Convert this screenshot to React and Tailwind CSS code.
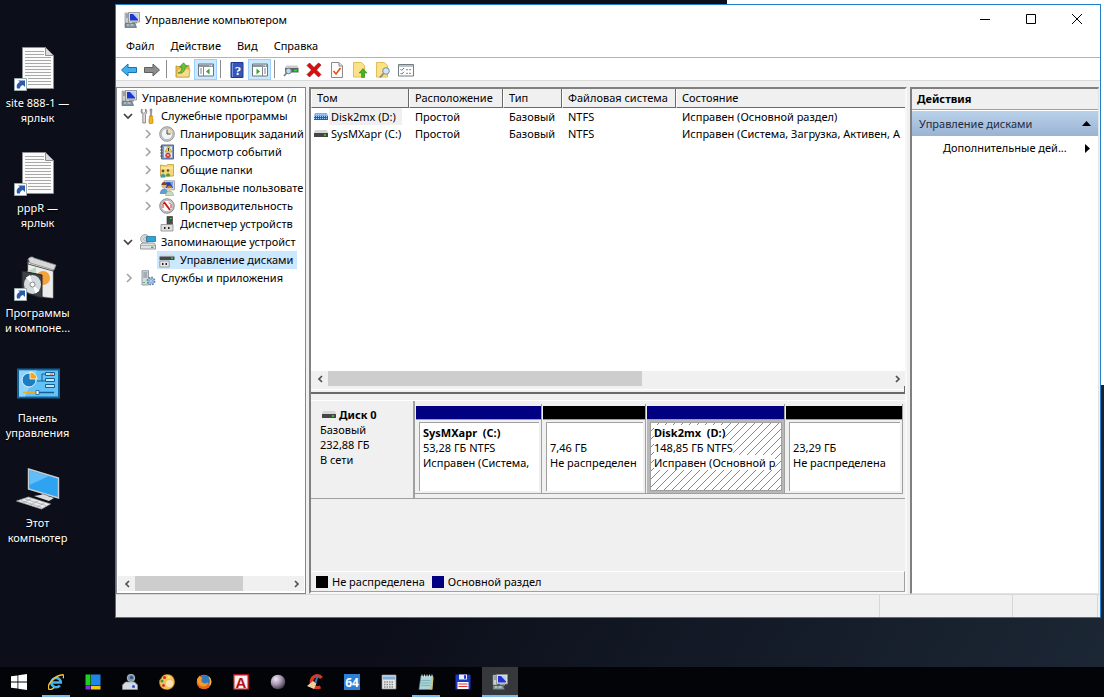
import { useState } from "react";

/* ---------- small icons, 16x16 ---------- */

function Svg({ size = 16, children }) {
  return (
    <svg width={size} height={size} viewBox="0 0 16 16" className="shrink-0" aria-hidden="true">
      {children}
    </svg>
  );
}

const ComputerIcon = ({ size }) => (
  <Svg size={size}>
    <path d="M1 1h4v10H1z" fill="#c9ccd0" stroke="#7d8288" strokeWidth=".6" />
    <path d="M2 3h2M2 5h2" stroke="#5b6066" strokeWidth=".8" />
    <path d="M4.500 .500h11v9.500h-11z" fill="#dcdcd6" stroke="#8b8b86" strokeWidth=".8" />
    <path d="M6 2h8v6.500H6z" fill="#1f35d0" />
    <path d="M9 2h5v5.500z" fill="#b9d0fc" />
    <path d="M8 10h5v1.500H8z" fill="#9a9a94" />
    <path d="M1 11.500h10l1.500 4H1z" fill="#7f979c" stroke="#4c5a5e" strokeWidth=".6" />
    <path d="M3 13h2M6.500 13h3" stroke="#d7e4e6" />
  </Svg>
);

const ToolsIcon = () => (
  <Svg>
    <path d="M2 1v3l1.800 1.500L5.500 4V1C7 2 7.300 5 5.500 6.500V15H2.800V6.500C.600 5 .800 2 2 1z" fill="#dcdcdc" stroke="#777" strokeWidth=".8" />
    <path d="M10 1h2l-.500 7h-1z" fill="#999" stroke="#777" strokeWidth=".5" />
    <path d="M9.300 8h3.400l-.600 2 .8 1v4l-1 .7H10l-1-.7v-4l.8-1z" fill="#f5b521" stroke="#c07c08" strokeWidth=".7" />
  </Svg>
);

const ClockIcon = () => (
  <Svg>
    <circle cx="8" cy="8" r="7.300" fill="#d0d0d0" stroke="#7d7d7d" strokeWidth=".8" />
    <circle cx="8" cy="8" r="5.600" fill="#f3f6f9" stroke="#8e8e8e" strokeWidth=".5" />
    <path d="M8 8V2.500A5.500 5.500 0 0 1 13.500 8z" fill="#f3dca4" />
    <path d="M8 3.500V8h3.500" fill="none" stroke="#3d4a66" />
  </Svg>
);

const EventIcon = () => (
  <Svg>
    <path d="M2.500 1h12v14h-12z" fill="#7f9cc9" stroke="#3e5a8c" strokeWidth=".9" />
    <path d="M5 2.500h8v11H5z" fill="#dfe8f5" />
    <path d="M1 3h3M1 6h3M1 9h3M1 12h3" stroke="#555" strokeWidth=".9" />
    <path d="M9.500 2l3.500 6H6z" fill="#ffd42a" stroke="#b98c00" strokeWidth=".6" />
    <path d="M9.500 4v3" stroke="#222" strokeWidth=".9" />
    <circle cx="9" cy="11.300" r="2.600" fill="#d92b2b" />
    <path d="M8 10.300l2 2m0-2l-2 2" stroke="#fff" strokeWidth=".8" />
  </Svg>
);

const SharedIcon = () => (
  <Svg>
    <path d="M1.500 3V14h13V2.500h-6L7.500 4z" fill="#f6d778" stroke="#c29a34" strokeWidth=".8" />
    <path d="M2 6h12" stroke="#fff0b8" />
    <circle cx="4" cy="9" r="1.400" fill="#7a4a28" />
    <path d="M1.500 15.500c0-5 5-5 5 0z" fill="#3f9c98" />
    <circle cx="9" cy="8.500" r="1.300" fill="#7a4a28" />
    <path d="M6.800 14.500c0-4.500 4.500-4.500 4.500 0z" fill="#5a9e3c" />
  </Svg>
);

const UsersIcon = () => (
  <Svg>
    <path d="M5 .800h10.500v9H5z" fill="#d9d9d9" stroke="#888" strokeWidth=".7" />
    <path d="M6.500 2.200H14V8H6.500z" fill="#1b3fc4" />
    <path d="M11 2.200h3V8z" fill="#7ea5f3" />
    <circle cx="5" cy="5.500" r="2.600" fill="#e0b48a" />
    <path d="M2.400 5c0-4 5.200-4 5.200 0z" fill="#7a4a20" />
    <path d="M.800 14c0-7 8.400-7 8.400 0z" fill="#5f9ed1" />
    <circle cx="10.500" cy="8.500" r="2.300" fill="#eccaa0" />
    <path d="M8.200 8c0-3.500 4.600-3.500 4.600 0z" fill="#b9802b" />
    <path d="M6.500 15.600c0-6 8-6 8 0z" fill="#c9dcc2" stroke="#7b9a76" strokeWidth=".5" />
  </Svg>
);

const PerfIcon = () => (
  <Svg>
    <circle cx="8" cy="8" r="7.300" fill="#c6c6c6" stroke="#777" strokeWidth=".8" />
    <circle cx="8" cy="8" r="5.600" fill="#fff" stroke="#999" strokeWidth=".5" />
    <path d="M4 10V5.500l2.500 0M10 4.500l2 2V10" fill="none" stroke="#c22" strokeWidth="1" />
    <path d="M5 4l6 8" stroke="#c81414" strokeWidth="1.800" />
  </Svg>
);

const DeviceIcon = () => (
  <Svg>
    <path d="M8 .500h5.500v8H8z" fill="#4a4d50" stroke="#2b2d2f" strokeWidth=".6" />
    <path d="M11 2.500h1.500" stroke="#56e04a" />
    <path d="M2 8.500h12v6.500H2z" fill="#dedede" stroke="#8c8c8c" strokeWidth=".8" />
    <path d="M5 11h1.500v2H5zM9 11h1.500v2H9z" fill="#222" />
  </Svg>
);

const StorageIcon = () => (
  <Svg>
    <circle cx="5" cy="5" r="4.400" fill="#d5dadd" stroke="#868c90" strokeWidth=".7" />
    <circle cx="5" cy="5" r="1.300" fill="#fff" stroke="#777" strokeWidth=".5" />
    <path d="M6.500 2.500h9v5h-9z" fill="#2aa7d6" stroke="#27627c" strokeWidth=".7" />
    <path d="M2 9h12l1.500 2v4H.500v-4z" fill="#dfe2e4" stroke="#7f8588" strokeWidth=".8" />
    <path d="M1 11.500h14" stroke="#999" strokeWidth=".6" />
    <path d="M11 13.300h2.500" stroke="#2cb82c" strokeWidth="1.300" />
  </Svg>
);

const DiskMgmtIcon = () => (
  <Svg>
    <path d="M2 2.500h12l1.500 2H.500z" fill="#d8d8d8" />
    <path d="M.500 4.500h15v3.500H.500z" fill="#46494c" />
    <path d="M12 6.200h2" stroke="#45e03c" strokeWidth="1.200" />
    <path d="M.800 9h9.400v6H.800z" fill="#e6e6e6" stroke="#8d8d8d" strokeWidth=".8" />
    <path d="M3 11h1.500v2H3zM6.500 11H8v2H6.500z" fill="#222" />
  </Svg>
);

const ServicesIcon = () => (
  <Svg>
    <path d="M2 .700h6.500V15H2z" fill="#d4dadf" stroke="#818b93" strokeWidth=".8" />
    <path d="M3.300 3h4M3.300 5h4M3.300 7h4" stroke="#6b7780" strokeWidth=".9" />
    <path d="M3.300 12.500h1.500" stroke="#2fae2f" />
    <circle cx="11" cy="11" r="3.600" fill="#a9c6e2" stroke="#5f86ad" strokeWidth="1.800" strokeDasharray="1.600 1.200" />
    <circle cx="11" cy="11" r="1.300" fill="#fff" stroke="#5f86ad" strokeWidth=".7" />
  </Svg>
);

const ArrowIcon = ({ fill, edge, flip }) => (
  <Svg>
    <path
      d="M.500 8L7 2v3.500h8.500v5H7V14z"
      fill={fill}
      stroke={edge}
      transform={flip ? "matrix(-1 0 0 1 16 0)" : undefined}
    />
  </Svg>
);

const UpFolderIcon = () => (
  <Svg>
    <path d="M1 4v11h13V3.500H9L8 5H5z" fill="#efc75e" stroke="#b88a20" strokeWidth=".8" />
    <path d="M1.500 15l1-8H15l-1 8z" fill="#f8dc8c" stroke="#c7982e" strokeWidth=".6" />
    <path d="M3 11c3-1 4-3 4-6H4.500L8.500 .800l4 4.200H10c0 5-3 7-7 6z" fill="#6cc23c" stroke="#2d7d12" strokeWidth=".6" />
  </Svg>
);

const PaneIcon = ({ right }) => (
  <Svg>
    <path d="M.500 2h15v12H.500z" fill="#fff" stroke="#6d7780" />
    <path d="M1 2.500h14v2.500H1z" fill="#8b969f" />
    <path d="M11.500 3.700h.8M13 3.700h1" stroke="#fff" />
    <path d={right ? "M10.500 5v9M12 7h2M12 9h2M12 11h2" : "M5.500 5v9M2 7h2M2 9h2M2 11h2"} stroke="#6d7780" strokeWidth=".9" />
    <path d={right ? "M4.500 6.500v6l3.500-3z" : "M11.500 6.500v6L8 9.500z"} fill="#3aa52a" />
  </Svg>
);

const HelpIcon = () => (
  <Svg>
    <path d="M2 .500h12v15H2z" fill="#3456b8" stroke="#1f3a8c" />
    <path d="M3.500 1v14" stroke="#7e9ae6" />
    <text x="9" y="12.500" textAnchor="middle" fontSize="13" fontWeight="bold" fontFamily="Liberation Serif, serif" fill="#fff">
      ?
    </text>
  </Svg>
);

const DriveScanIcon = () => (
  <Svg>
    <path d="M3 3.500h11.500l1 2.500H2z" fill="#c9cccf" />
    <path d="M2 6h13.500v4.500H2z" fill="#5d6367" />
    <path d="M11 8.500h3" stroke="#3ee03a" strokeWidth="1.500" />
    <circle cx="5.500" cy="9" r="2.800" fill="#b9d9ec" stroke="#6e7d88" />
    <path d="M3.700 11L1 14" stroke="#777" strokeWidth="1.600" />
  </Svg>
);

const DeleteIcon = () => (
  <Svg>
    <path d="M1 3.500L3.500 1 8 5.500 12.500 1 15 3 10.500 8l4.500 4.500L12.500 15 8 10.500 3.500 15 1 12.500 5.500 8z" fill="#d60f0f" stroke="#8e0000" strokeWidth=".6" />
  </Svg>
);

const CheckPageIcon = () => (
  <Svg>
    <path d="M2.500.500H10L13.500 4v11.500h-11z" fill="#fdfdfd" stroke="#8b8b8b" />
    <path d="M10 .500V4h3.500" fill="#ddd" stroke="#8b8b8b" />
    <path d="M4.500 9l2.500 3 4.500-6" fill="none" stroke="#e2561c" strokeWidth="1.700" />
  </Svg>
);

const NoteUpIcon = () => (
  <Svg>
    <path d="M1.500.500h8l3 3v11.500h-11z" fill="#fbe187" stroke="#dab84c" strokeWidth=".9" />
    <path d="M9.500 15.500V11H7l4-4.500 4 4.500h-2.500v4.500z" fill="#3fb32a" stroke="#25821a" strokeWidth=".5" />
  </Svg>
);

const NoteFindIcon = () => (
  <Svg>
    <path d="M1.500.500h8l3 3v11.500h-11z" fill="#fbe187" stroke="#dab84c" strokeWidth=".9" />
    <circle cx="11" cy="9" r="3.300" fill="#cfe6f3" stroke="#7b8c98" />
    <path d="M8.500 11.500l-3.500 4" stroke="#8a8a8a" strokeWidth="1.800" />
  </Svg>
);

const OptionsIcon = () => (
  <Svg>
    <path d="M.500 2.500h15v11.500H.500z" fill="#fff" stroke="#737b83" />
    <path d="M1 4h14" stroke="#9aa2aa" strokeWidth="1.300" />
    <path d="M2.500 7.200l1.200 1.200L6 6M2.500 11l1.200 1.200L6 9.800" fill="none" stroke="#2f7fd6" />
    <path d="M8 7.700h2M11 7.700h2M8 11.300h2M11 11.300h2" stroke="#888" />
  </Svg>
);

const VolumeIcon = ({ selected }) => (
  <svg width="14" height="8" viewBox="0 0 14 8" className="shrink-0" aria-hidden="true">
    <path d="M1 0h12l1 3H0z" fill={selected ? "#7db4e8" : "#d6d6d6"} />
    <path d="M0 3h14v4H0z" fill={selected ? "#1c62a8" : "#454545"} />
    {selected ? (
      <path d="M0 1.500h14M0 3.500h14M0 5.500h14" stroke="#9fd0ff" strokeWidth="1" strokeDasharray="1 1" />
    ) : (
      <path d="M10 5h2" stroke="#35e035" strokeWidth="1.500" />
    )}
  </svg>
);

const Chevron = ({ dir, className }) => {
  const d = { left: "M7 2L4 5l3 3", right: "M4 1l4 4-4 4", down: "M1 3l4 4 4-4", next: "M4 2l3 3-3 3" }[dir];
  return (
    <svg width="10" height="10" viewBox="0 0 10 10" className={className} aria-hidden="true">
      <path d={d} fill="none" stroke="currentColor" strokeWidth="1.700" />
    </svg>
  );
};

/* ---------- desktop icons, 48x48 ---------- */

const ShortcutBadge = () => (
  <g>
    <path d="M.500 33.500h12v12H.500z" fill="#fff" stroke="#9aa" />
    <path d="M3 43.500c-1-4 1-6 3-6.500L4 35.500h7v6.500L9 40c-2 .5-3 1.500-3 3.500z" fill="#2a5ca8" />
  </g>
);

const DocumentIcon = () => (
  <svg width="48" height="48" viewBox="0 0 48 48" aria-hidden="true">
    <path d="M8.500 2.500h23l8 8v33h-31z" fill="#fbfbfb" stroke="#8f8f8f" />
    <path d="M31.500 2.500v8h8z" fill="#dcdcdc" stroke="#8f8f8f" />
    <path
      d="M11 6.500h19M11 9.500h19M11 12.500h26M11 15.500h26M11 18.500h26M11 21.500h26M11 24.500h26M11 27.500h26M11 30.500h26M14 33.500h23M14 36.500h23M14 39.500h23"
      stroke="#a8a8a8"
    />
    <ShortcutBadge />
  </svg>
);

const ProgramsIcon = () => (
  <svg width="48" height="48" viewBox="0 0 48 48" aria-hidden="true">
    <path d="M14 7l25 7v29l-17-2-8-5z" fill="#ececea" stroke="#aaa" strokeWidth=".6" />
    <path d="M14 4c3-3 5-2 6-1l22 7-2 5-24-7z" fill="#d7d7d7" stroke="#8b8b8b" strokeWidth=".8" />
    <path d="M14 4v5l25 7" fill="none" stroke="#555" />
    <circle cx="29" cy="23" r="7" fill="#f3a33a" />
    <path d="M12 17l10-5v12z" fill="#b9d9bd" />
    <path d="M8 16l20 4v23L8 37z" fill="#3d4348" stroke="#222" />
    <ellipse cx="18.500" cy="29.500" rx="8.500" ry="9.500" fill="#d4dadd" />
    <path d="M18.500 29.500L12 22.500l4-2.500zM18.500 29.500l7 6-4 3z" fill="#fff" />
    <circle cx="18.500" cy="29.500" r="2.500" fill="#fff" stroke="#888" />
    <ShortcutBadge />
  </svg>
);

const ControlPanelIcon = () => (
  <svg width="48" height="48" viewBox="0 0 48 48" aria-hidden="true">
    <path d="M4 9.500h41v28H4z" fill="#63c2f7" stroke="#0f6399" strokeWidth="2" />
    <path d="M5 10.500h18L11 36.500H5z" fill="#8fd5fb" />
    <circle cx="15" cy="20" r="7" fill="#1b7ec2" stroke="#e4f5ff" />
    <path d="M16 19v-7a7 7 0 0 1 7 7z" fill="#f6a81c" stroke="#fff" strokeWidth=".8" />
    <path d="M23 21h5v-7h3M28 21h3" fill="none" stroke="#145f94" />
    <path d="M31.500 12.500h9v3h-9zM31.500 18.500h9v3h-9zM31.500 24.500h9v3h-9z" fill="#bfe7ff" stroke="#145f94" />
    <path d="M36 14h3" stroke="#f60" />
    <path d="M9 32.500h13" stroke="#f6a81c" strokeWidth="1.500" />
    <path d="M25 32.500h15" stroke="#145f94" strokeWidth="1.500" />
    <path d="M22 30.500h3v4h-3z" fill="#fff" stroke="#145f94" strokeWidth=".8" />
  </svg>
);

const ThisPcIcon = () => (
  <svg width="48" height="48" viewBox="0 0 48 48" aria-hidden="true">
    <path d="M14.500 4l30 9v20l-30-9z" fill="#2ea3f2" stroke="#c9ced2" strokeWidth="1.400" />
    <path d="M15.500 5.500L35 11 15.500 20z" fill="#63bdf8" />
    <path d="M27 28l7 2v3h-5z" fill="#8a8f93" />
    <path d="M20 31l9-1.500 11 3.500-5 3z" fill="#d9dcde" />
    <path d="M2.500 36l12-4 22 7-9 5z" fill="#e9ebec" stroke="#a5a9ac" strokeWidth=".7" />
    <path d="M7 35.500l21 7M11 34l21 6.500M9 38l8-4.500M16 40l8-4M23 42l7-4" stroke="#9da2a6" strokeWidth=".7" />
  </svg>
);

/* ---------- taskbar icons ---------- */

const StartIcon = () => (
  <Svg>
    <path d="M0 2.300l6.500-.9v6.200H0zM7.300 1.300L16 0v7.600H7.300zM0 8.400h6.500v6.200L0 13.700zM7.300 8.400H16V16l-8.700-1.200z" fill="#fff" />
  </Svg>
);

const IeIcon = () => (
  <Svg>
    <path d="M3.500 8.500h9.300a4.700 4.700 0 1 0-1 3" fill="none" stroke="#45b4ee" strokeWidth="2.600" />
    <path d="M1 15.500C-2 11 7 1 15 .800c1.200.6.800 2 .2 3.500" fill="none" stroke="#f3c32f" strokeWidth="1.500" />
    <path d="M1 15.500c1.500.5 3.500-.5 5-1.700" fill="none" stroke="#f3c32f" strokeWidth="1.400" />
  </Svg>
);

const TilesIcon = () => (
  <Svg>
    <path d="M.500.500h5v11h-5z" fill="#1fd11f" />
    <path d="M6 .500h9.500v11H6z" fill="#1f86e8" />
    <path d="M.500 12h5v3.500h-5z" fill="#8a2be2" />
    <path d="M6 12h9.500v3.500H6z" fill="#f0c419" />
  </Svg>
);

const WebcamIcon = () => (
  <Svg>
    <circle cx="9" cy="4" r="3.800" fill="#7b93ad" stroke="#c9d5e1" strokeWidth=".7" />
    <circle cx="9.500" cy="3.500" r="1.600" fill="#35506b" />
    <path d="M3.500 8h9l3 3v4.500H.500V11z" fill="#d5dae0" stroke="#8c959f" strokeWidth=".7" />
    <circle cx="11.500" cy="12.500" r="1.500" fill="#3050d8" />
  </Svg>
);

const PaletteIcon = () => (
  <Svg>
    <path d="M8 .500c5 0 7.500 3.500 7.500 7.500 0 5-4 7.500-7.500 7.500C3 15.500.500 12 .500 8c0-3 2-3 2.500-5C3.500 1.500 6 .500 8 .500z" fill="#f7c25c" stroke="#c87d1b" strokeWidth=".6" />
    <circle cx="5.500" cy="3.500" r="1.600" fill="#d93025" />
    <circle cx="10" cy="3.200" r="1.500" fill="#f4ec55" />
    <circle cx="3" cy="7" r="1.500" fill="#2f9e44" />
    <circle cx="4.500" cy="11.500" r="1.400" fill="#d93025" />
    <circle cx="10.500" cy="9.500" r="3.400" fill="#fbe3b5" />
  </Svg>
);

const FirefoxIcon = () => (
  <Svg>
    <circle cx="8" cy="8" r="7.300" fill="#e8641b" />
    <circle cx="9" cy="6" r="4.800" fill="#2e79c4" />
    <path d="M1 5c1-1 2-2 2.500-3.500C4 3 5 3.500 6.500 4 5 5.500 5 7 6.500 8.500 8.500 10 11 9.500 12 8c0 5-7 6-9.500 2C1.500 8.500 1 7 1 5z" fill="#f79a25" />
    <path d="M13 3c2 2.500 2 6 .8 8" fill="none" stroke="#f7c341" strokeWidth="1.200" />
  </Svg>
);

const BoxAIcon = () => (
  <Svg>
    <path d="M.500.500h15v15H.500z" fill="#c01818" stroke="#a81414" />
    <path d="M1.500 1.500h13v13h-13z" fill="#fbeeee" />
    <text x="8" y="13.500" textAnchor="middle" fontSize="15" fontWeight="bold" fontFamily="Liberation Sans, sans-serif" fill="#b31010">
      A
    </text>
  </Svg>
);

const SphereIcon = () => (
  <Svg>
    <defs>
      <radialGradient id="sphere" cx=".35" cy=".3" r=".75">
        <stop offset="0" stopColor="#f0e8f6" />
        <stop offset=".5" stopColor="#a898b2" />
        <stop offset="1" stopColor="#3a3444" />
      </radialGradient>
    </defs>
    <circle cx="8" cy="8" r="7.300" fill="url(#sphere)" />
  </Svg>
);

const CleanerIcon = () => (
  <Svg>
    <path d="M14.500 4C12 .500 6 1 4.500 6.500 3.500 12 8 15 13.500 13" fill="none" stroke="#d43a22" strokeWidth="3.400" />
    <path d="M10 1l1.500 1-2 7-2-1z" fill="#2f78b8" />
    <path d="M0 12l6-5 3.500 2.500L7 15z" fill="#efcfa0" />
  </Svg>
);

const SixtyFourIcon = () => (
  <Svg>
    <path d="M0 0h16v16H0z" fill="#2d7fd8" />
    <text x="8" y="12.500" textAnchor="middle" fontSize="12" fontWeight="bold" fontFamily="Noto Sans, sans-serif" fill="#fff">
      64
    </text>
  </Svg>
);

const CalcIcon = () => (
  <Svg>
    <path d="M1 1h14v14H1z" fill="#e6e6e6" stroke="#8d8d8d" strokeWidth=".7" />
    <path d="M2 2.500h12v3H2z" fill="#7eaeda" />
    <path d="M3 8h10M3 10.500h10M3 13h10" stroke="#8a8a8a" strokeWidth="1.400" strokeDasharray="1.500 1" />
  </Svg>
);

const NotepadIcon = () => (
  <Svg>
    <path d="M3 2h12l-1.500 13.500H1z" fill="#a8d5d8" stroke="#59878b" strokeWidth=".7" />
    <path d="M14 3l1.500.500-1 12H12z" fill="#cfc17a" />
    <path d="M4 .500v3M6.500.500v3M9 .500v3M11.500.500v3M14 .500v3" stroke="#e6e6e6" strokeWidth=".9" />
    <path d="M3.500 6.500h9M3.300 9h9M3 11.500h9" stroke="#6fa5a9" strokeWidth=".7" />
  </Svg>
);

const FloppyIcon = () => (
  <Svg>
    <path d="M.500.500h14l1 1v14H.500z" fill="#1c38c4" />
    <path d="M4 .500h8v5H4z" fill="#e8ecff" />
    <path d="M9 1.200h2v3.500H9z" fill="#1c38c4" />
    <path d="M2.500 8h11v7h-11z" fill="#fff" />
    <path d="M3.500 10h9M3.500 12.500h9" stroke="#d33" strokeWidth="1.200" />
  </Svg>
);

/* ---------- data ---------- */

const shortcuts = [
  { lines: ["site 888-1 —", "ярлык"], Icon: DocumentIcon },
  { lines: ["pppR —", "ярлык"], Icon: DocumentIcon },
  { lines: ["Программы", "и компоне..."], Icon: ProgramsIcon },
  { lines: ["Панель", "управления"], Icon: ControlPanelIcon },
  { lines: ["Этот", "компьютер"], Icon: ThisPcIcon },
];

const tree = [
  { level: 0, label: "Управление компьютером (л", Icon: ComputerIcon },
  { level: 1, label: "Служебные программы", Icon: ToolsIcon, arrow: "down" },
  { level: 2, label: "Планировщик заданий", Icon: ClockIcon, arrow: "right" },
  { level: 2, label: "Просмотр событий", Icon: EventIcon, arrow: "right" },
  { level: 2, label: "Общие папки", Icon: SharedIcon, arrow: "right" },
  { level: 2, label: "Локальные пользовате", Icon: UsersIcon, arrow: "right" },
  { level: 2, label: "Производительность", Icon: PerfIcon, arrow: "right" },
  { level: 2, label: "Диспетчер устройств", Icon: DeviceIcon },
  { level: 1, label: "Запоминающие устройст", Icon: StorageIcon, arrow: "down" },
  { level: 2, label: "Управление дисками", Icon: DiskMgmtIcon },
  { level: 1, label: "Службы и приложения", Icon: ServicesIcon, arrow: "right" },
];

const indents = ["pl-[3px]", "pl-1", "pl-[23px]"];

const volumes = [
  { name: "Disk2mx (D:)", layout: "Простой", type: "Базовый", fs: "NTFS", status: "Исправен (Основной раздел)" },
  { name: "SysMXapr (C:)", layout: "Простой", type: "Базовый", fs: "NTFS", status: "Исправен (Система, Загрузка, Активен, А" },
];

const partitions = [
  { name: "SysMXapr  (C:)", size: "53,28 ГБ NTFS", status: "Исправен (Система,", primary: true },
  { name: "", size: "7,46 ГБ", status: "Не распределен" },
  { name: "Disk2mx  (D:)", size: "148,85 ГБ NTFS", status: "Исправен (Основной р", primary: true },
  { name: "", size: "23,29 ГБ", status: "Не распределена" },
];

const tools = [
  { label: "Назад", icon: <ArrowIcon fill="#3fb0ee" edge="#1c70b0" /> },
  { label: "Вперед", icon: <ArrowIcon fill="#8d8d8d" edge="#5e5e5e" flip /> },
  null,
  { label: "Вверх", icon: <UpFolderIcon /> },
  { label: "Дерево консоли", icon: <PaneIcon />, on: true },
  null,
  { label: "Помощь", icon: <HelpIcon /> },
  { label: "Панель действий", icon: <PaneIcon right />, on: true },
  null,
  { label: "Повторить проверку", icon: <DriveScanIcon /> },
  { label: "Удалить", icon: <DeleteIcon /> },
  { label: "Свойства", icon: <CheckPageIcon /> },
  { label: "Открыть", icon: <NoteUpIcon /> },
  { label: "Найти", icon: <NoteFindIcon /> },
  { label: "Параметры", icon: <OptionsIcon /> },
];

const tasks = [
  { label: "Пуск", Icon: StartIcon },
  { label: "Internet Explorer", Icon: IeIcon, running: true },
  { label: "Плитки", Icon: TilesIcon },
  { label: "Камера", Icon: WebcamIcon },
  { label: "Палитра", Icon: PaletteIcon },
  { label: "Firefox", Icon: FirefoxIcon },
  { label: "Словарь", Icon: BoxAIcon },
  { label: "Сфера", Icon: SphereIcon },
  { label: "Очистка", Icon: CleanerIcon },
  { label: "AIDA64", Icon: SixtyFourIcon },
  { label: "Калькулятор", Icon: CalcIcon },
  { label: "Блокнот", Icon: NotepadIcon, running: true },
  { label: "Дискета", Icon: FloppyIcon },
  { label: "Управление компьютером", Icon: ComputerIcon, active: true },
];

/* ---------- parts ---------- */

function ScrollBar({ thumb }) {
  return (
    <div className="flex h-[15px] shrink-0 bg-[#f0f0f0] text-[#505050]">
      <button type="button" aria-label="Прокрутить влево" className="flex w-[17px] items-center justify-center">
        <Chevron dir="left" />
      </button>
      <div className="flex-1">
        <div className={`h-full bg-[#cdcdcd] ${thumb}`} />
      </div>
      <button type="button" aria-label="Прокрутить вправо" className="flex w-[17px] items-center justify-center">
        <Chevron dir="next" />
      </button>
    </div>
  );
}

function TitleBar() {
  return (
    <div className="flex h-[31px] items-start justify-between">
      <div className="flex h-[29px] items-center gap-[5px] pl-2">
        <ComputerIcon />
        <h1>Управление компьютером</h1>
      </div>
      <div className="flex">
        <button type="button" aria-label="Свернуть" className="flex h-7 w-[46px] items-center justify-center">
          <svg width="10" height="10" viewBox="0 0 10 10">
            <path d="M0 5.500h10" stroke="#000" />
          </svg>
        </button>
        <button type="button" aria-label="Развернуть" className="flex h-7 w-[46px] items-center justify-center">
          <svg width="10" height="10" viewBox="0 0 10 10">
            <path d="M.500.500h9v9h-9z" fill="none" stroke="#000" />
          </svg>
        </button>
        <button type="button" aria-label="Закрыть" className="flex h-7 w-[46px] items-center justify-center">
          <svg width="10" height="10" viewBox="0 0 10 10">
            <path d="M0 0l10 10M10 0L0 10" stroke="#000" />
          </svg>
        </button>
      </div>
    </div>
  );
}

function Toolbar() {
  return (
    <div className="flex h-[23px] items-end border-b border-[#d9d9d9] pl-px">
      {tools.map((tool, i) =>
        tool ? (
          <button
            key={i}
            type="button"
            aria-label={tool.label}
            className={`flex h-[21px] w-[23px] items-center justify-center ${
              tool.on ? "border border-[#99d1ff] bg-[#cce8ff]" : ""
            }`}
          >
            {tool.icon}
          </button>
        ) : (
          <div key={i} className="mb-0.5 ml-[3px] mr-1 h-[18px] w-px bg-[#8d8d8d]" />
        )
      )}
    </div>
  );
}

function TreePane({ selected, onSelect }) {
  return (
    <nav className="flex w-[190px] shrink-0 flex-col overflow-hidden border border-[#828790] bg-white px-px pb-0.5 pt-px">
      <ul className="flex-1 overflow-hidden">
        {tree.map(({ level, label, Icon, arrow }) => (
          <li key={label} className={`flex h-[18px] items-center ${indents[level]}`}>
            {level > 0 && (
              <span className="flex w-4 shrink-0 items-center justify-center pr-1">
                {arrow && <Chevron dir={arrow} className={`shrink-0 ${arrow === "down" ? "text-[#404040]" : "text-[#a6a6a6]"}`} />}
              </span>
            )}
            <button
              type="button"
              onClick={() => onSelect(label)}
              className={`flex h-[18px] items-center gap-[5px] whitespace-nowrap pr-1 ${level > 0 ? "pl-0.5" : ""} ${
                selected === label ? "bg-[#cce8ff]" : ""
              }`}
            >
              <Icon />
              {label}
            </button>
          </li>
        ))}
      </ul>
      <ScrollBar thumb="w-[71%]" />
    </nav>
  );
}

function VolumeTable() {
  const head =
    "h-[19px] border-b border-l border-r border-b-[#696969] border-l-white border-r-[#696969] bg-[#f0f0f0] pl-[5px] text-left font-normal last:border-r-0";
  return (
    <div className="flex-1 overflow-hidden bg-white">
      <table className="w-full table-fixed border-separate border-spacing-0 whitespace-nowrap">
        <thead>
          <tr>
            <th className={`w-[98px] ${head}`}>Том</th>
            <th className={`w-[94px] ${head}`}>Расположение</th>
            <th className={`w-[59px] ${head}`}>Тип</th>
            <th className={`w-[114px] ${head}`}>Файловая система</th>
            <th className={head}>Состояние</th>
          </tr>
        </thead>
        <tbody>
          {volumes.map((v, i) => (
            <tr key={v.name} className="h-[17px] leading-[17px]">
              <td className="p-0 pl-[3px]">
                <div className="flex items-center gap-px">
                  <VolumeIcon selected={i === 0} />
                  <span className={`h-[17px] px-0.5 ${i === 0 ? "bg-[#f0f0f0] pr-1.5" : ""}`}>{v.name}</span>
                </div>
              </td>
              <td className="p-0 pl-1.5">{v.layout}</td>
              <td className="p-0 pl-1.5">{v.type}</td>
              <td className="p-0 pl-1.5">{v.fs}</td>
              <td className="overflow-hidden p-0 pl-1.5">{v.status}</td>
            </tr>
          ))}
        </tbody>
      </table>
    </div>
  );
}

function Partition({ part, selected, onSelect }) {
  const text = `w-fit whitespace-pre ${selected ? "bg-white" : ""}`;
  return (
    <button
      type="button"
      onClick={onSelect}
      className="flex h-[90px] min-w-0 flex-col border-b border-r border-[#a0a0a0] pl-px pt-0.5 text-left"
    >
      <div className={`h-[13px] w-full shrink-0 ${part.primary ? "bg-[#000080]" : "bg-black"}`} />
      <div className={`flex w-full flex-1 border-t border-[#a0a0a0] p-0.5 pl-[3px] ${selected ? "bg-[#b8b8b8]" : ""}`}>
        <div
          className={`w-full overflow-hidden border-l border-t border-[#a0a0a0] pl-[3px] pt-0.5 leading-[15px] ${
            selected
              ? "border-b border-r bg-[linear-gradient(135deg,#fff_0_44%,#888_44%_56%,#fff_56%)] bg-size-[8px_8px]"
              : "bg-white"
          }`}
        >
          <div className={`h-[15px] font-bold ${text}`}>{part.name}</div>
          <div className={text}>{part.size}</div>
          <div className={text}>{part.status}</div>
        </div>
      </div>
    </button>
  );
}

function DiskView() {
  const [current, setCurrent] = useState(2);

  return (
    <div className="flex h-[198px] shrink-0 flex-col bg-[#f0f0f0]">
      <div className="mt-1.5 flex border-t border-white">
        <div className="flex h-[98px] w-[104px] shrink-0 flex-col border-b border-r-2 border-[#a0a0a0] pl-[9px] pt-1.5 leading-[15px]">
          <div className="flex items-center gap-[3px] pl-0.5 font-bold">
            <VolumeIcon />
            Диск 0
          </div>
          <div>Базовый</div>
          <div>232,88 ГБ</div>
          <div>В сети</div>
        </div>
        <div className="flex-1 border-b border-[#a0a0a0] pr-0.5 pt-[3px]">
          <div className="grid grid-cols-[127fr_104fr_139fr_118fr]">
            {partitions.map((p, i) => (
              <Partition key={i} part={p} selected={current === i} onSelect={() => setCurrent(i)} />
            ))}
          </div>
        </div>
      </div>
      <div className="flex-1" />
      <div className="flex h-[21px] items-center gap-1 border-b border-r border-t border-b-[#a0a0a0] border-r-[#a0a0a0] border-t-white pl-[5px]">
        <span className="size-3 bg-black" />
        <span className="mr-[3px]">Не распределена</span>
        <span className="size-3 bg-[#000080]" />
        <span>Основной раздел</span>
      </div>
    </div>
  );
}

function ActionsPane() {
  return (
    <aside className="w-[189px] shrink-0 border-b border-l-2 border-r border-t-2 border-b-[#e3e3e3] border-l-[#808080] border-r-[#e3e3e3] border-t-[#808080] bg-white">
      <h2 className="mb-px flex h-[21px] items-center border-b border-[#a0a0a0] bg-[#f0f0f0] pl-[5px] font-bold">Действия</h2>
      <button
        type="button"
        className="flex h-[25px] w-full items-center justify-between bg-linear-to-b from-[#bad1ea] to-[#9ab3d2] pl-[7px] pr-[7px] text-[#1e2b40]"
      >
        Управление дисками
        <svg width="9" height="5" viewBox="0 0 9 5">
          <path d="M0 5l4.500-5L9 5z" fill="#000" />
        </svg>
      </button>
      <button type="button" className="flex h-6 w-full items-center justify-between pl-[31px] pr-2">
        Дополнительные дей...
        <svg width="5" height="9" viewBox="0 0 5 9">
          <path d="M0 0l5 4.500L0 9z" fill="#000" />
        </svg>
      </button>
    </aside>
  );
}

function ManagementWindow() {
  const [selected, setSelected] = useState("Управление дисками");

  return (
    <main className="relative mb-[49px] mr-[3px] mt-1 flex min-w-0 flex-1 flex-col border border-[#1e80cc] bg-white">
      <TitleBar />
      <div className="flex h-[22px] items-center gap-4 border-b border-[#b4b4b4] pb-0.5 pl-2.5">
        {["Файл", "Действие", "Вид", "Справка"].map((item) => (
          <button key={item} type="button">
            {item}
          </button>
        ))}
      </div>
      <Toolbar />
      <div className="flex flex-1 gap-[3px] bg-[#f0f0f0] pr-px pt-1.5">
        <TreePane selected={selected} onSelect={setSelected} />
        <section className="flex min-w-0 flex-1 flex-col border-2 border-b-[#f8f8f8] border-l-[#808080] border-r-[#f8f8f8] border-t-[#808080]">
          <VolumeTable />
          <ScrollBar thumb="w-[56%]" />
          <div className="h-2 shrink-0 border-b-2 border-r border-[#696969] bg-[#f0f0f0] pt-[3px]">
            <div className="border-t border-white" />
          </div>
          <DiskView />
        </section>
        <ActionsPane />
      </div>
      <footer className="flex h-[23px] shrink-0 justify-end border-t border-[#d7d7d7] bg-[#f0f0f0] pr-0.5">
        <div className="w-[133px] border-l border-[#d7d7d7]" />
        <div className="w-[86px] border-l border-r border-[#d7d7d7]" />
      </footer>
    </main>
  );
}

function Taskbar() {
  return (
    <footer className="flex h-[30px] shrink-0 gap-px bg-[#030407] pl-px">
      {tasks.map(({ label, Icon, running, active }) => (
        <button
          key={label}
          type="button"
          aria-label={label}
          className={`flex w-9 flex-col items-center justify-between pt-[7px] ${active ? "bg-[#36383b]" : ""}`}
        >
          <Icon />
          <span className={`h-0.5 ${active ? "w-full bg-[#76b9ed]" : running ? "w-7 bg-[#76b9ed]" : "w-7"}`} />
        </button>
      ))}
    </footer>
  );
}

export default function App() {
  return (
    <div className="relative flex min-h-screen flex-col bg-[linear-gradient(120deg,#0c0f1a_50%,#1c2735)] font-['Noto_Sans','Open_Sans',sans-serif] text-[11px] leading-4 text-black">
      {/* another window peeking out from behind */}
      <div className="absolute right-0 top-0 h-[385px] w-[377px] bg-white" />
      <div className="flex flex-1">
        <ul className="flex w-[115px] shrink-0 flex-col gap-[25px] pt-[45px]">
          {shortcuts.map(({ lines, Icon }) => (
            <li key={lines.join()} className="flex w-[75px] flex-col items-center gap-0.5 text-white">
              <div className="pl-px">
                <Icon />
              </div>
              <div className="h-[30px] whitespace-nowrap text-center leading-[15px] [text-shadow:0_1px_2px_#000]">
                {lines[0]}
                <br />
                {lines[1]}
              </div>
            </li>
          ))}
        </ul>
        <ManagementWindow />
      </div>
      <Taskbar />
    </div>
  );
}
